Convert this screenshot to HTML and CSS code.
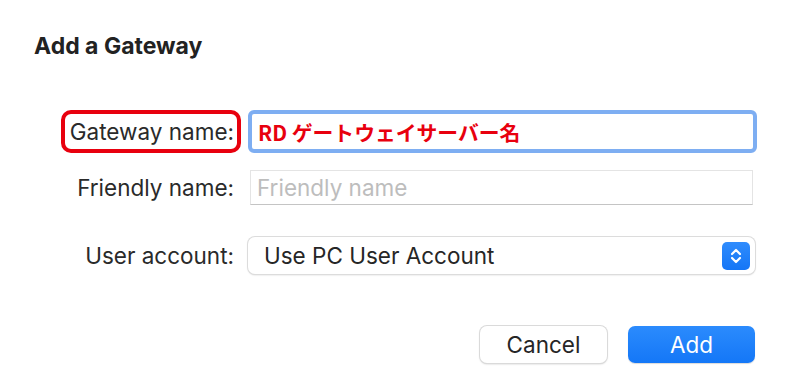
FILE: index.html
```html
<!DOCTYPE html>
<html lang="en">
<head>
  <meta charset="UTF-8" />
  <title>Add a Gateway</title>
  <link rel="stylesheet" href="styles.css">
</head>
<body>
  <div class="dialog">
    <h1>Add a Gateway</h1>

    <form class="gateway-form">
      <div class="row row-gateway">
        <label class="label label-marked">Gateway name:</label>
        <div class="field field-focused">
          <span class="field-value">RD ゲートウェイサーバー名</span>
        </div>
      </div>

      <div class="row row-friendly">
        <label class="label">Friendly name:</label>
        <div class="field field-plain">
          <span class="placeholder">Friendly name</span>
        </div>
      </div>

      <div class="row row-account">
        <label class="label">User account:</label>
        <div class="select">
          <span>Use PC User Account</span>
          <span class="stepper">
            <svg width="14" height="20" viewBox="0 0 14 20">
              <path d="M3 8 L7 4 L11 8" fill="none" stroke="#fff" stroke-width="2.2" stroke-linecap="round" stroke-linejoin="round"/>
              <path d="M3 12 L7 16 L11 12" fill="none" stroke="#fff" stroke-width="2.2" stroke-linecap="round" stroke-linejoin="round"/>
            </svg>
          </span>
        </div>
      </div>

      <div class="actions">
        <button type="button" class="btn btn-cancel">Cancel</button>
        <button type="submit" class="btn btn-add">Add</button>
      </div>
    </form>
  </div>
</body>
</html>
```

FILE: styles.css
```css
* {
  margin: 0;
  padding: 0;
  box-sizing: border-box;
}

body {
  font-family: Inter, "Noto Sans", "Noto Sans CJK JP", sans-serif;
  background-color: #fff;
  color: #262626;
  width: 785px;
  height: 383px;
  overflow: hidden;
}

.dialog {
  padding: 30px 0 0 34px;
}

h1 {
  font-size: 23px;
  font-weight: 700;
  line-height: 32px;
  color: #222;
}

.gateway-form {
  margin-top: 48px;
}

.row {
  display: flex;
  align-items: center;
}

.label {
  width: 207px;
  padding-right: 7px;
  text-align: right;
  font-size: 22.5px;
  color: #2a2a2a;
  white-space: nowrap;
}

.row-gateway {
  height: 43px;
}

.row-friendly {
  height: 35px;
  margin-top: 17px;
}

.row-account {
  height: 37px;
  margin-top: 32px;
}

.label-marked {
  margin-left: 27px;
  width: 180px;
  height: 43px;
  border: 4px solid #e8000e;
  border-radius: 10px;
  padding: 0 3px 0 0;
  display: flex;
  align-items: center;
  justify-content: flex-end;
}

.field {
  margin-left: 7px;
  display: flex;
  align-items: center;
}

.field-focused {
  width: 509px;
  height: 43px;
  border: 4px solid #7eaef2;
  border-radius: 6px;
  padding-left: 6px;
}

.field-value {
  font-family: "Noto Sans CJK JP", sans-serif;
  font-weight: 700;
  font-size: 20.8px;
  color: #e8000e;
}

.field-plain {
  margin-left: 9px;
  width: 503px;
  height: 35px;
  border: 1px solid #e4e4e4;
  border-bottom-color: #c4c4c4;
  padding-left: 6px;
}

.placeholder {
  font-size: 22.5px;
  color: #bdbdbd;
}

.select {
  margin-left: 7px;
  width: 507px;
  height: 37px;
  border-radius: 7px;
  background: #fff;
  box-shadow: 0 0 0 1px #dcdcdc, 0 1px 2px rgba(0, 0, 0, 0.2);
  display: flex;
  align-items: center;
  justify-content: space-between;
  padding: 0 5px 0 16px;
  font-size: 22.5px;
  color: #262626;
}

.stepper {
  width: 28px;
  height: 28px;
  border-radius: 5px;
  background: linear-gradient(#2f8cfd, #1576f6);
  display: flex;
  align-items: center;
  justify-content: center;
}

.actions {
  display: flex;
  justify-content: flex-end;
  gap: 21px;
  width: 721px;
  margin-top: 52px;
}

.btn {
  width: 127px;
  height: 37px;
  border: none;
  border-radius: 7px;
  font-family: inherit;
  font-size: 22.5px;
}

.btn-cancel {
  background: #fff;
  color: #262626;
  box-shadow: 0 0 0 1px #dadada, 0 1px 2px rgba(0, 0, 0, 0.25);
}

.btn-add {
  background: linear-gradient(#2b8bfd, #1477f7);
  color: #fff;
  box-shadow: 0 1px 1px rgba(0, 0, 0, 0.15);
}
```
